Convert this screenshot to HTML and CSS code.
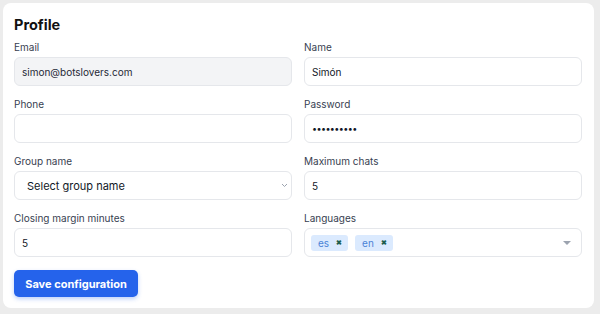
FILE: index.html
```html
<!DOCTYPE html>
<html>
<head>
<meta charset="utf-8">
<link rel="stylesheet" href="styles.css">
</head>
<body>
<div class="card">
  <h1 class="title">Profile</h1>
  <div class="grid">
    <div class="field">
      <label class="label">Email</label>
      <input class="input input-disabled" type="text" value="simon@botslovers.com" disabled>
    </div>
    <div class="field">
      <label class="label">Name</label>
      <input class="input" type="text" value="Simón">
    </div>
    <div class="field">
      <label class="label">Phone</label>
      <input class="input" type="text" value="">
    </div>
    <div class="field">
      <label class="label">Password</label>
      <input class="input input-pass" type="password" value="1234567890">
    </div>
    <div class="field">
      <label class="label">Group name</label>
      <div class="select">
        <span class="select-text">Select group name</span>
        <svg class="chev" width="7" height="5" viewBox="0 0 7 5"><path d="M1 1l2.5 2.5 2.5-2.5" fill="none" stroke="#9ca3af" stroke-width="1"/></svg>
      </div>
    </div>
    <div class="field">
      <label class="label">Maximum chats</label>
      <input class="input" type="text" value="5">
    </div>
    <div class="field">
      <label class="label">Closing margin minutes</label>
      <input class="input" type="text" value="5">
    </div>
    <div class="field">
      <label class="label">Languages</label>
      <div class="multi">
        <span class="chip">es <span class="x">✖</span></span>
        <span class="chip">en <span class="x">✖</span></span>
        <span class="caret"></span>
      </div>
    </div>
  </div>
  <button class="btn">Save configuration</button>
</div>
</body>
</html>
```
FILE: styles.css
```css
* { box-sizing: border-box; }
html, body { margin: 0; padding: 0; }
body {
  background: #ececec;
  font-family: Inter, "Noto Sans", sans-serif;
  color: #111827;
  padding: 3px 6px 6px 3px;
  width: 600px;
  height: 314px;
}
.card {
  background: #fff;
  border-radius: 8px;
  padding: 12px 12px 11px 11px;
  height: 305px;
}
.title {
  margin: 0 0 4px 0;
  font-size: 14.5px;
  line-height: 20px;
  font-weight: 700;
  color: #111;
}
.grid {
  display: grid;
  grid-template-columns: 1fr 1fr;
  column-gap: 12px;
  row-gap: 10px;
}
.field { display: flex; flex-direction: column; gap: 2px; }
.label {
  font-size: 10px;
  line-height: 16px;
  color: #374151;
}
.input {
  height: 29px;
  border: 1px solid #e5e7eb;
  border-radius: 6px;
  padding: 0 7px;
  font-family: Inter, sans-serif;
  font-size: 10px;
  color: #111827;
  background: #fff;
  outline: none;
  width: 100%;
}
.input-disabled { background: #f3f4f6; color: #1f2937; }
.input-pass { font-size: 9px; letter-spacing: -0.6px; }
.select {
  height: 29px;
  border: 1px solid #e5e7eb;
  border-radius: 6px;
  padding: 0 3px 0 12px;
  display: flex;
  align-items: center;
  justify-content: space-between;
  font-size: 11px;
  color: #111827;
}
.multi {
  height: 29px;
  border: 1px solid #e5e7eb;
  border-radius: 6px;
  padding: 0 10px 0 6px;
  display: flex;
  align-items: center;
  gap: 7px;
}
.chip {
  background: #dbeafe;
  color: #4b83d6;
  font-size: 10px;
  border-radius: 3px;
  height: 16px;
  padding: 0 6px 0 7px;
  display: flex;
  align-items: center;
  gap: 7px;
}
.x { color: #1f5f4f; font-size: 7px; font-weight: 700; }
.caret {
  margin-left: auto;
  width: 0; height: 0;
  border-left: 4px solid transparent;
  border-right: 4px solid transparent;
  border-top: 4px solid #9ca3af;
}
.btn {
  margin-top: 13px;
  height: 27px;
  width: 124px;
  background: #2563eb;
  color: #fff;
  border: none;
  border-radius: 5px;
  font-family: Inter, sans-serif;
  font-size: 11px;
  font-weight: 700;
  box-shadow: 0 2px 4px rgba(37, 99, 235, 0.3);
  padding: 0;
}
```
